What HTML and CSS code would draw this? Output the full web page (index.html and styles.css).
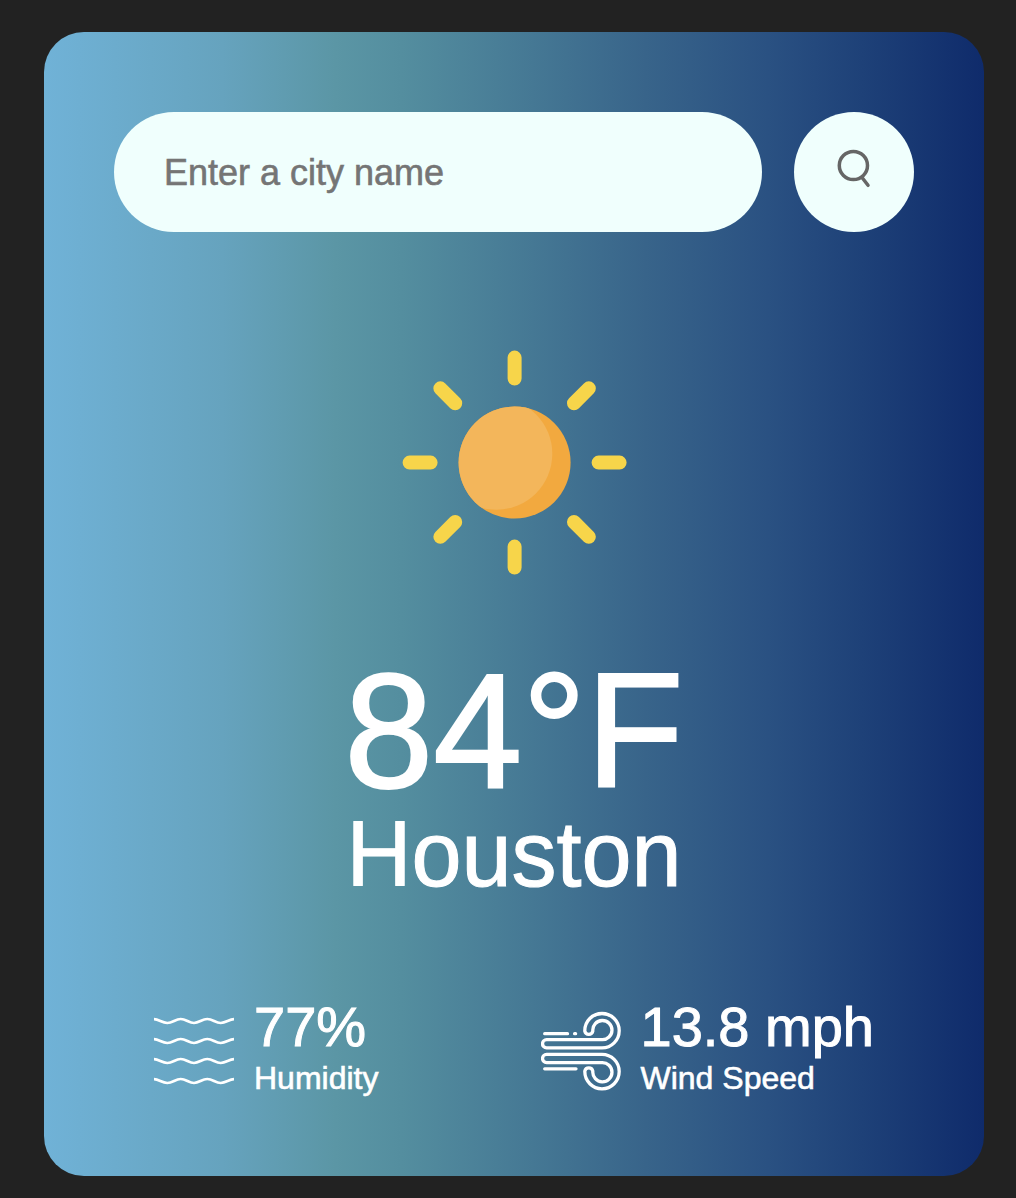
FILE: index.html
```html
<!DOCTYPE html>
<html lang="en">
<head>
<meta charset="utf-8">
<title>Weather</title>
<link rel="stylesheet" href="styles.css">
</head>
<body>
<main class="card">
  <form class="search">
    <input class="search-input" type="text" placeholder="Enter a city name" spellcheck="false">
    <button class="search-button" type="button" aria-label="Search">
      <svg viewBox="0 0 120 120" fill="none" stroke="#666" stroke-width="3.5" stroke-linecap="round">
        <circle cx="59.4" cy="53.5" r="14.1"/>
        <path d="M68 65.5L74 73.3"/>
      </svg>
    </button>
  </form>
  <section class="weather">
    <svg class="sun" viewBox="-127.6 -127.6 256 256">
      <defs><clipPath id="disc"><circle r="56"/></clipPath></defs>
      <circle r="56" fill="#f2a93f"/>
      <circle cx="-18.3" cy="-8.8" r="56" fill="#f3b65b" clip-path="url(#disc)"/>
      <g stroke="#f7d54a" stroke-width="14" stroke-linecap="round">
        <path d="M0-105V-84M0 84V105M-105 0H-84M84 0H105"/>
        <path d="M0-105V-84M0 84V105M-105 0H-84M84 0H105" transform="rotate(45)"/>
      </g>
    </svg>
    <h1 class="temp">84°F</h1>
    <h2 class="city">Houston</h2>
  </section>
  <section class="details">
    <div class="detail">
      <svg class="detail-icon" viewBox="0 0 80 80" fill="none" stroke="#fff" stroke-width="2.7">
        <path id="wave" d="M0 8.2C5 8.4 8 12 13.3 12S21.5 8 26.7 8 35 12 40 12 48 8 53.3 8 61.5 12 66.7 12 75 8.4 80 8.2"/>
        <use href="#wave" y="20"/>
        <use href="#wave" y="40"/>
        <use href="#wave" y="60"/>
      </svg>
      <div>
        <p class="value">77%</p>
        <p class="label">Humidity</p>
      </div>
    </div>
    <div class="detail">
      <svg class="detail-icon" viewBox="0 0 80 80" fill="none" stroke="#fff" stroke-width="3.3" stroke-linecap="round">
        <path d="M3.7 22.7H26.5M33.6 22.7H34.6M3.7 57.8H35"/>
        <path id="gust" d="M61 28.7A9.6 9.6 0 1 0 51.8 19.7V20.2A4.1 4.1 0 0 1 43.8 20.2V19.7A17.2 17.2 0 1 1 61 36.9H5.6A4.1 4.1 0 0 1 5.6 28.7Z"/>
        <use href="#gust" transform="matrix(1 0 0 -1 0 80.3)"/>
      </svg>
      <div>
        <p class="value">13.8 mph</p>
        <p class="label">Wind Speed</p>
      </div>
    </div>
  </section>
</main>
</body>
</html>
```
FILE: styles.css
```css
* {
  box-sizing: border-box;
  margin: 0;
  padding: 0;
  font-family: "Liberation Sans", Helvetica, Arial, sans-serif;
}

body {
  background: #222;
  overflow: hidden;
}

.card {
  width: 940px;
  height: 1144px;
  margin: 32px 0 0 44px;
  padding: 80px 70px;
  border-radius: 40px;
  color: #fff;
  background: linear-gradient(to right, #70b2d7, #66a3be 19%, #5b96a5 31%, #548e9f 38%, #457894 52%, #38648a 64%, #2a5182 77%, #1e4178 87%, #0f2b6b);
}

.search {
  display: flex;
  gap: 32px;
}

.search-input {
  flex: 1;
  min-width: 0;
  height: 120px;
  padding: 2px 50px 0;
  border: 0;
  border-radius: 60px;
  background: #f0fffd;
  color: #555;
  font-size: 36px;
}

.search-input::placeholder {
  color: #757575;
  -webkit-text-stroke: 0.6px;
}

.search-button {
  width: 120px;
  height: 120px;
  border: 0;
  border-radius: 50%;
  background: #f0fffd;
}

.search-button svg {
  display: block;
}

.weather {
  display: flex;
  flex-direction: column;
  align-items: center;
  padding-top: 103px;
}

.sun {
  width: 256px;
  height: 256px;
  margin: 0 0 59px 1px;
}

.temp,
.city {
  font-weight: 400;
  transform-origin: 0 84%;
}

.temp {
  font-size: 160px;
  line-height: 163px;
  -webkit-text-stroke: 2px;
  transform: scaleY(1.025);
}

.city {
  font-size: 90px;
  line-height: 84px;
  -webkit-text-stroke: 1px;
  transform: scaleY(1.035);
}

.details {
  display: flex;
  justify-content: space-between;
  margin-top: 98px;
  padding: 0 40px;
}

.detail {
  display: flex;
  gap: 20px;
}

.detail-icon {
  width: 80px;
  height: 80px;
  margin-top: 16px;
}

.value,
.label {
  -webkit-text-stroke: 0.6px;
}

.value {
  font-size: 56px;
  line-height: 64px;
  -webkit-text-stroke: 1px;
}

.label {
  font-size: 32px;
  line-height: 38px;
}
```
